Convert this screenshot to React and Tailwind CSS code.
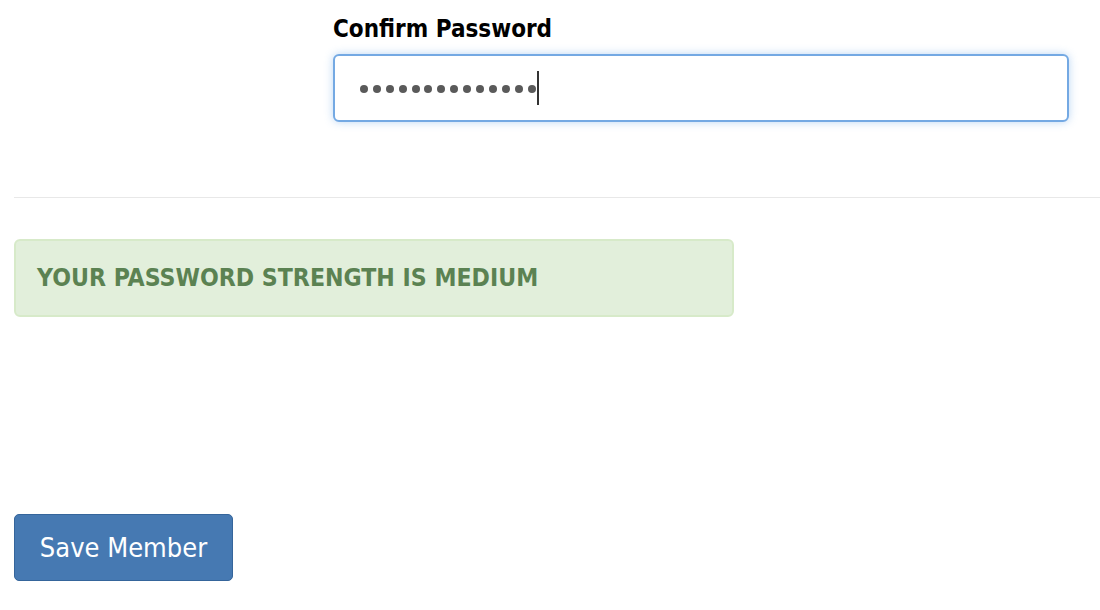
export default function App() {
    const font = {fontFamily: '"DejaVu Sans Condensed", "DejaVu Sans", Verdana, sans-serif'}
    const dots = Array.from({length: 14})

    return (
        <div className="w-[1100px] h-[610px] bg-white overflow-hidden" style={font}>
            {/*confirm password field*/}
            <div className="pl-[333px] pr-[31px] pt-[15px]">
                <label className="block text-[24px] font-bold text-black leading-[28px]">
                    Confirm Password
                </label>
                <div className="mt-[11px] h-[68px] rounded-[6px] border-2 border-[#74a9e3] bg-white shadow-[0_0_8px_rgba(102,163,230,0.45)] flex items-center pl-[25px]">
                    <div className="flex items-center gap-[4.9px] mt-[2px]">
                        {dots.map((_, i) => (
                            <span key={i} className="block w-[8px] h-[8px] rounded-full bg-[#5a5a5a]"></span>
                        ))}
                    </div>
                    <span className="inline-block w-[2px] h-[34px] bg-[#333] ml-[1px]"></span>
                </div>
            </div>

            <hr className="ml-[14px] mt-[75px] border-0 border-t border-[#e8e8e8]"/>

            {/*strength alert*/}
            <div className="ml-[14px] mt-[41px] w-[720px] h-[78px] rounded-[6px] border-2 border-[#d7eac9] bg-[#e2efdb] flex items-center pl-[21px]">
                <p className="text-[24.6px] font-bold text-[#5b8252] leading-none">
                    YOUR PASSWORD STRENGTH IS MEDIUM
                </p>
            </div>

            <div className="ml-[14px] mt-[197px]">
                <button className="h-[67px] w-[219px] rounded-[5px] border border-[#35659b] bg-[#4679b2] text-white text-[27px] leading-none">
                    Save Member
                </button>
            </div>
        </div>
    )
}
